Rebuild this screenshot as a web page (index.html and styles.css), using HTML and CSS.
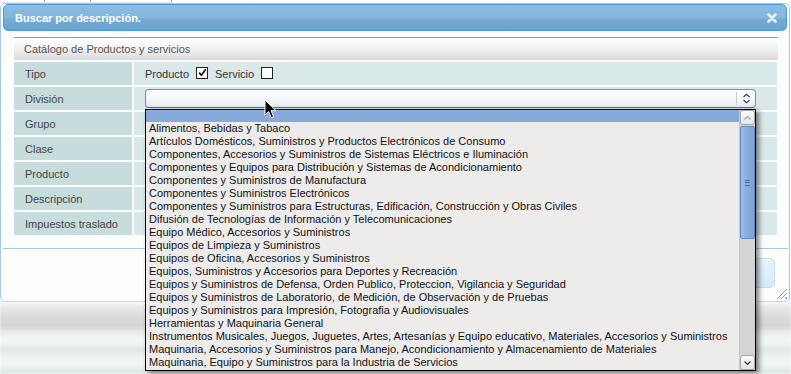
FILE: index.html
```html
<!DOCTYPE html>
<html lang="es">

<head>
    <meta charset="UTF-8">
    <title>Buscar por descripción</title>
    <link rel="stylesheet" href="styles.css">
</head>

<body>
    <div class="strip"></div>

    <div class="dialog">
        <div class="dialog-title">
            <span>Buscar por descripción.</span>
            <svg class="close" width="10" height="10" viewBox="0 0 10 10">
                <path d="M1.5 1.5 L8.5 8.5 M8.5 1.5 L1.5 8.5" stroke="#eef3f8" stroke-width="2.6" stroke-linecap="round" />
            </svg>
        </div>

        <div class="dialog-content">
            <div class="panel">
                <div class="panel-head">Catálogo de Productos y servicios</div>
                <div class="form-grid">
                    <div class="lbl">Tipo</div>
                    <div class="val">
                        Producto
                        <span class="chk">
                            <svg width="9" height="9" viewBox="0 0 9 9">
                                <path d="M1.2 4.6 L3.4 7.2 L7.8 1.2" stroke="#111" stroke-width="1.7" fill="none" />
                            </svg>
                        </span>
                        Servicio
                        <span class="chk"></span>
                    </div>

                    <div class="lbl">División</div>
                    <div class="val">
                        <div class="select">
                            <span class="spin">
                                <svg width="9" height="11" viewBox="0 0 9 11">
                                    <path d="M1.5 4 L4.5 1.2 L7.5 4 M1.5 7 L4.5 9.8 L7.5 7" stroke="#3c4450" stroke-width="1.2" fill="none" />
                                </svg>
                            </span>
                        </div>
                    </div>

                    <div class="lbl">Grupo</div>
                    <div class="val"></div>
                    <div class="lbl">Clase</div>
                    <div class="val"></div>
                    <div class="lbl">Producto</div>
                    <div class="val"></div>
                    <div class="lbl">Descripción</div>
                    <div class="val"></div>
                    <div class="lbl">Impuestos traslado</div>
                    <div class="val"></div>
                </div>
            </div>
        </div>

        <div class="button-pane">
            <button class="btn">Buscar</button>
        </div>
        <div class="grip"></div>
    </div>

    <div class="backdrop"></div>

    <div class="dropdown">
        <ul class="options">
            <li class="selected">&nbsp;</li>
            <li>Alimentos, Bebidas y Tabaco</li>
            <li>Artículos Domésticos, Suministros y Productos Electrónicos de Consumo</li>
            <li>Componentes, Accesorios y Suministros de Sistemas Eléctricos e Iluminación</li>
            <li>Componentes y Equipos para Distribución y Sistemas de Acondicionamiento</li>
            <li>Componentes y Suministros de Manufactura</li>
            <li>Componentes y Suministros Electrónicos</li>
            <li>Componentes y Suministros para Estructuras, Edificación, Construcción y Obras Civiles</li>
            <li>Difusión de Tecnologías de Información y Telecomunicaciones</li>
            <li>Equipo Médico, Accesorios y Suministros</li>
            <li>Equipos de Limpieza y Suministros</li>
            <li>Equipos de Oficina, Accesorios y Suministros</li>
            <li>Equipos, Suministros y Accesorios para Deportes y Recreación</li>
            <li>Equipos y Suministros de Defensa, Orden Publico, Proteccion, Vigilancia y Seguridad</li>
            <li>Equipos y Suministros de Laboratorio, de Medición, de Observación y de Pruebas</li>
            <li>Equipos y Suministros para Impresión, Fotografia y Audiovisuales</li>
            <li>Herramientas y Maquinaria General</li>
            <li>Instrumentos Musicales, Juegos, Juguetes, Artes, Artesanías y Equipo educativo, Materiales, Accesorios y Suministros</li>
            <li>Maquinaria, Accesorios y Suministros para Manejo, Acondicionamiento y Almacenamiento de Materiales</li>
            <li>Maquinaria, Equipo y Suministros para la Industria de Servicios</li>
        </ul>
        <div class="scrollbar">
            <div class="sb-btn">
                <svg width="9" height="6" viewBox="0 0 9 6"><path d="M1.5 4.5 L4.5 1.5 L7.5 4.5" stroke="#9aa" stroke-width="1.2" fill="none" /></svg>
            </div>
            <div class="sb-thumb"><span class="sb-grip"></span></div>
            <div class="sb-track"></div>
            <div class="sb-btn">
                <svg width="9" height="6" viewBox="0 0 9 6"><path d="M1.5 1.5 L4.5 4.5 L7.5 1.5" stroke="#333" stroke-width="1.2" fill="none" /></svg>
            </div>
        </div>
    </div>

    <svg class="cursor" width="13" height="20" viewBox="0 0 13 20">
        <path d="M1 1 L1 16 L4.6 12.6 L7.3 18.6 L9.6 17.6 L7 11.7 L12 11.7 Z" fill="#000" stroke="#fff" stroke-width="1" />
    </svg>
</body>

</html>
```

FILE: styles.css
```css
body {
    margin: 0;
    width: 791px;
    height: 374px;
    overflow: hidden;
    background: #fff;
    font-family: 'Liberation Sans', Arial, sans-serif;
    font-size: 11px;
    position: relative;
}

.strip {
    height: 3px;
    width: 172px;
    border-bottom: 1px solid #e2e6e8;
    box-sizing: border-box;
    background:
        linear-gradient(#a4aaae, #a4aaae) 44px 0 / 1px 2px no-repeat,
        linear-gradient(#a4aaae, #a4aaae) 90px 0 / 1px 2px no-repeat,
        linear-gradient(#a4aaae, #a4aaae) 171px 0 / 1px 3px no-repeat;
}

.dialog {
    width: 790px;
    height: 299px;
    box-sizing: border-box;
    border: 1px solid #a6c9e2;
    border-radius: 5px;
    background: #fcfdfd;
    padding: 0 2px;
    position: relative;
    display: flex;
    flex-direction: column;
}

.dialog-title {
    height: 27px;
    box-sizing: border-box;
    border: 1px solid #4c9bd8;
    border-radius: 5px;
    background: linear-gradient(to bottom, #8dbce1 0%, #84b5dc 50%, #74aad3 58%, #6ca4cf 100%);
    color: #fff;
    font-weight: bold;
    display: flex;
    align-items: center;
    justify-content: space-between;
    padding: 0 9px 0 11px;
}

.dialog-content {
    padding: 6px 0 0 11px;
    flex: 1;
}

.panel {
    width: 764px;
}

.panel-head {
    height: 23px;
    box-sizing: border-box;
    border-top: 1px solid #9a9a9a;
    background: linear-gradient(to bottom, #ffffff 0%, #f4f4f4 45%, #d9d9d9 100%);
    color: #555;
    padding-left: 10px;
    display: flex;
    align-items: center;
}

.form-grid {
    display: grid;
    grid-template-columns: 118px 1fr;
    grid-auto-rows: 23px;
    gap: 2px;
    padding-top: 2px;
}

.lbl {
    background: #c6dcdd;
    color: #444;
    padding-left: 11px;
    display: flex;
    align-items: center;
}

.val {
    background: #d9e8e8;
    color: #333;
    padding-left: 11px;
    display: flex;
    align-items: center;
    margin-right: 1px;
}

.chk {
    width: 10px;
    height: 10px;
    border: 1px solid #222;
    background: #fff;
    display: inline-flex;
    align-items: center;
    justify-content: center;
    margin: 0 7px 2px 7px;
}

.select {
    width: 611px;
    height: 19px;
    box-sizing: border-box;
    border: 1px solid #7d8ea4;
    border-bottom-color: #5d6f86;
    border-radius: 4px;
    background: linear-gradient(to bottom, #ffffff 0%, #f3f5f9 60%, #e6eaf0 100%);
    display: flex;
    justify-content: flex-end;
    align-items: center;
    margin-top: -1px;
}

.spin {
    width: 18px;
    height: 13px;
    border-left: 1px solid #c3cad3;
    display: flex;
    align-items: center;
    justify-content: center;
}

.button-pane {
    height: 53px;
    border-top: 1px solid #a6c9e2;
    margin: 0 -1px 0 0;
    display: flex;
    justify-content: flex-end;
    align-items: flex-start;
    padding: 9px 13px 0 0;
    box-sizing: border-box;
}

.btn {
    width: 80px;
    height: 30px;
    border: 1px solid #c5dbec;
    border-radius: 5px;
    background: linear-gradient(to bottom, #e9f4fd 0%, #dfeffc 50%, #d5e9fa 100%);
    color: #2e6e9e;
    font-family: inherit;
    font-size: 11px;
}

.grip {
    position: absolute;
    right: 2px;
    bottom: 2px;
    width: 11px;
    height: 11px;
    background: repeating-linear-gradient(135deg, transparent 0 2px, #5ea3d8 2px 3px);
    clip-path: polygon(100% 0, 100% 100%, 0 100%);
}

.backdrop {
    height: 72px;
    background: linear-gradient(to bottom, #f6f8f8 0px, #e7e8e8 6px, #dcdcdc 14px, #d3d4d4 24px, #e6ebeb 30px, #f1f6f6 36px, #eef4f4 42px, #dde7e7 48px, #e8efef 52px, #f0f6f6 58px, #eef4f4 64px, #dde7e7 70px);
    filter: blur(1px);
}

.dropdown {
    position: absolute;
    left: 145px;
    top: 109px;
    width: 611px;
    height: 262px;
    box-sizing: border-box;
    border: 1px solid #000;
    background: #edeceb;
    display: flex;
    box-shadow: 3px 2px 5px rgba(0, 0, 0, 0.5);
}

.options {
    list-style: none;
    margin: 0;
    padding: 0;
    flex: 1;
    overflow: hidden;
    color: #111;
}

.options li {
    height: 13px;
    line-height: 13px;
    padding-left: 3px;
    white-space: nowrap;
}

.options li.selected {
    height: 12px;
    background: #86aad9;
}

.scrollbar {
    width: 15px;
    background: #d4d4d4;
    border-left: 1px solid #c6c6c6;
    display: flex;
    flex-direction: column;
}

.sb-btn {
    height: 13px;
    border: 1px solid #a8a8a8;
    border-radius: 3px;
    background: linear-gradient(to bottom, #fafafa, #e6e6e6);
    display: flex;
    align-items: center;
    justify-content: center;
}

.sb-thumb {
    height: 111px;
    margin-top: 1px;
    border: 1px solid #6389c0;
    border-radius: 2px;
    background: linear-gradient(to right, #9bbbe4, #87aadb 60%, #7ea2d4);
    display: flex;
    align-items: center;
    justify-content: center;
}

.sb-grip {
    width: 5px;
    height: 6px;
    background: repeating-linear-gradient(to bottom, #4a6f9e 0 1px, transparent 1px 2.5px);
}

.sb-track {
    flex: 1;
}

.cursor {
    position: absolute;
    left: 264px;
    top: 99px;
}
```
